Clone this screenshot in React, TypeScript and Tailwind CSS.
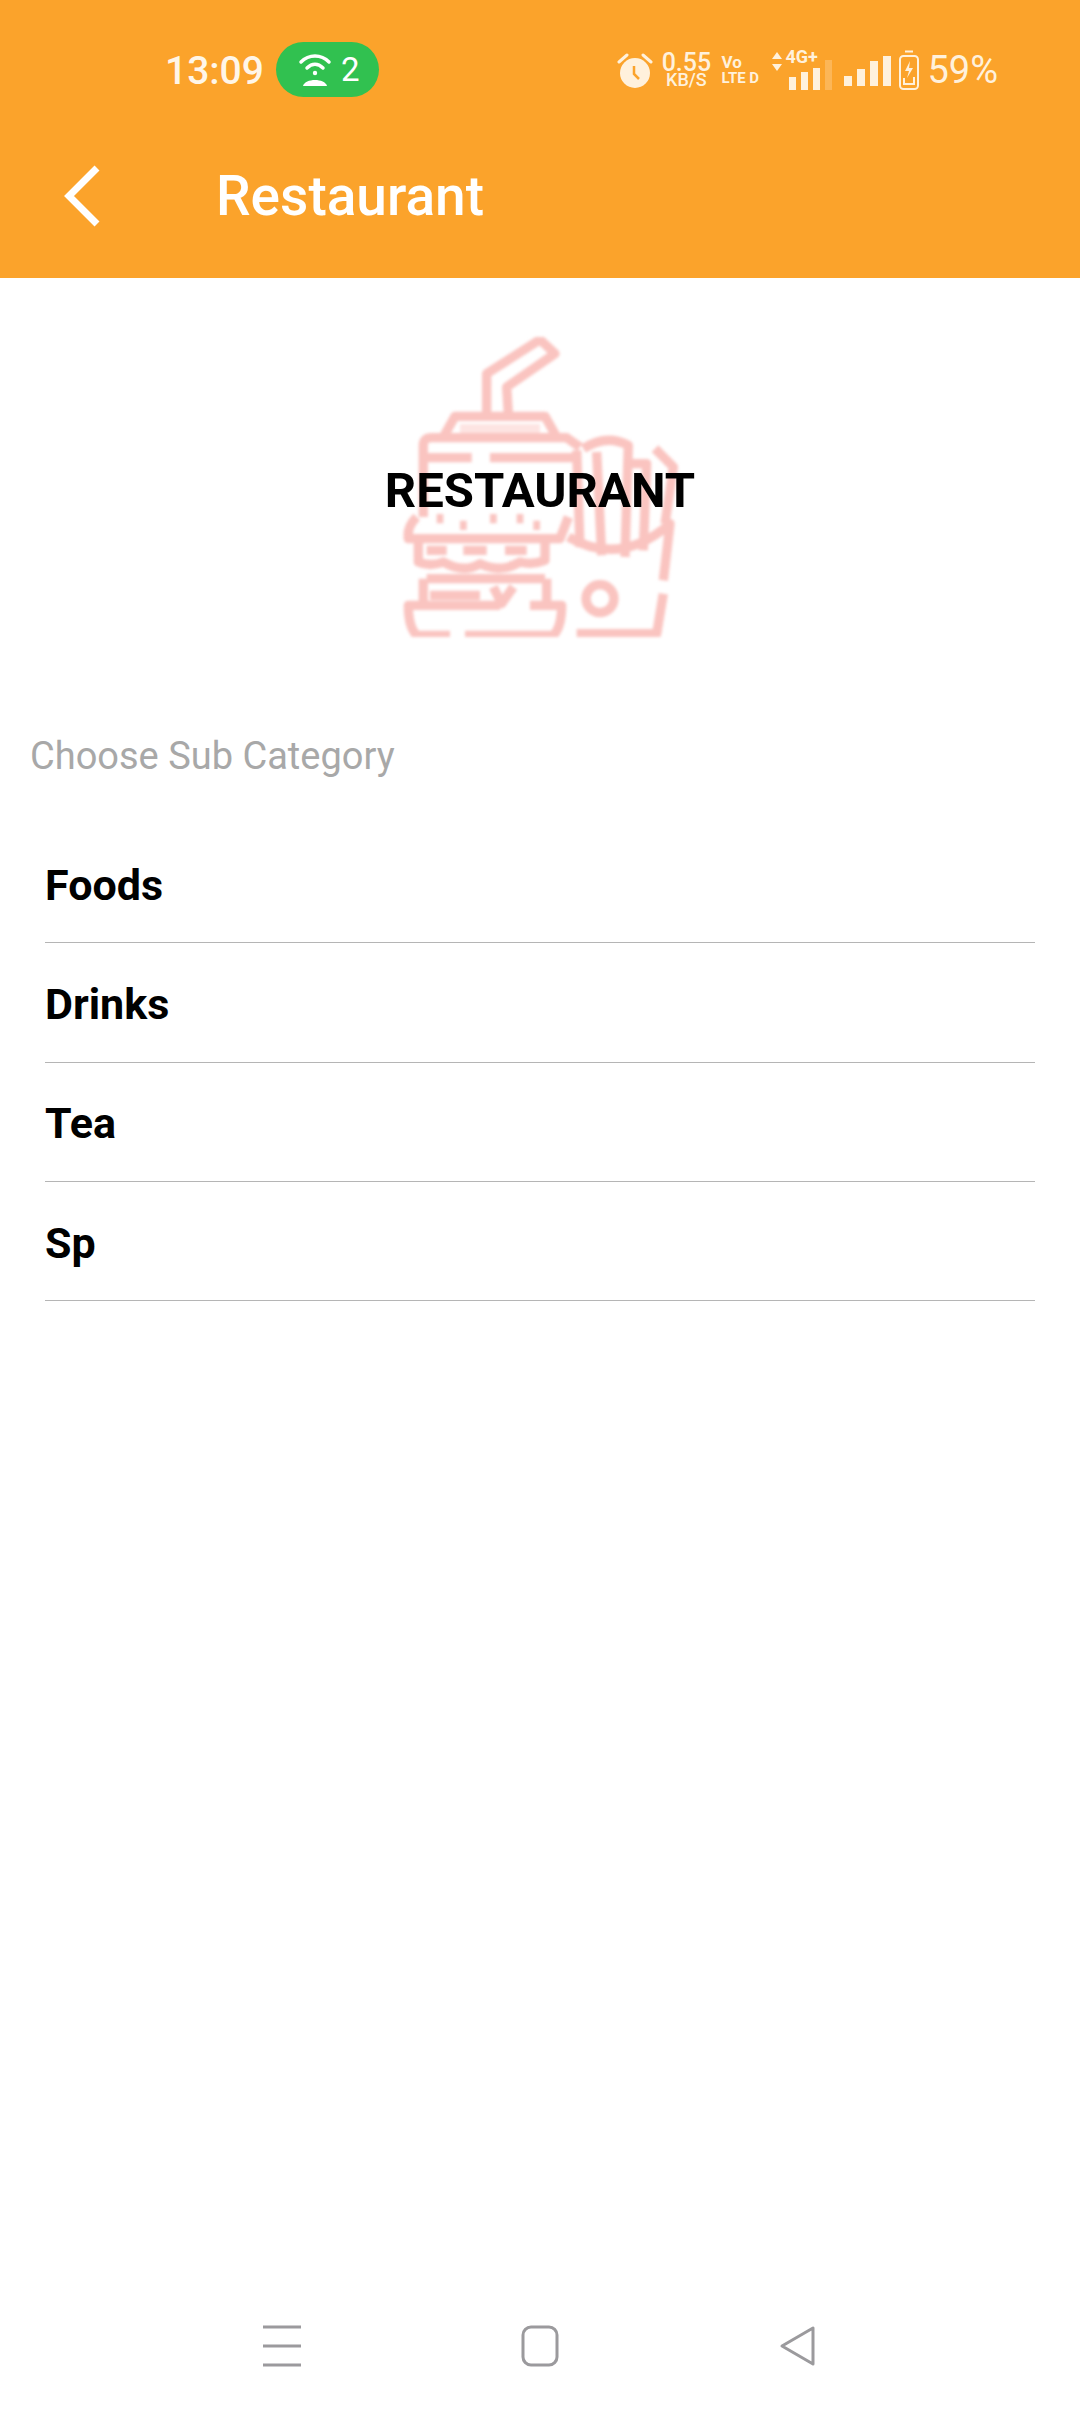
const ROBOTO = "font-['Roboto',sans-serif]";

const rows = ["Foods", "Drinks", "Tea", "Sp"];

/* ------------------------------------------------------------------ */
/*  Status bar                                                         */
/* ------------------------------------------------------------------ */
function Bars({ heights, widths = 8, faded }: { heights: number[]; widths?: number; faded?: number }) {
  return (
    <svg width={heights.length * (widths + 5)} height="32" viewBox={`0 0 ${heights.length * (widths + 5)} 32`}>
      {heights.map((h, i) => (
        <rect
          key={i}
          x={i * (widths + 5)}
          y={32 - h}
          width={widths}
          height={h}
          fill="#fff1dc"
          opacity={faded === i ? 0.25 : 1}
        />
      ))}
    </svg>
  );
}

function StatusBar() {
  return (
    <div className="flex h-[97px] items-start pl-[165px] pr-[82px] pt-[42px]">
      <div className="flex h-[55px] items-center">
        <span className="pt-[3px] text-[39px] font-medium leading-none text-[#fff6e8]">13:09</span>
        <div className="ml-[12px] flex h-[55px] w-[103px] items-center rounded-full bg-[#31c150] pl-[21px]">
          <svg width="36" height="34" viewBox="0 0 36 34" fill="none" stroke="#fff" strokeWidth="3.5" strokeLinecap="round">
            <path d="M4 9 C12 1 24 1 32 9" />
            <path d="M10 15 C15 10 21 10 26 15" />
            <circle cx="18" cy="20" r="2.2" fill="#fff" stroke="none" />
            <path d="M6 33 C8 25 28 25 30 33 Z" fill="#fff" stroke="none" />
          </svg>
          <span className="ml-[8px] text-[33px] leading-none text-white">2</span>
        </div>
      </div>

      <div className="ml-auto flex h-[55px] items-center text-[#fff1dc]">
        <svg width="36" height="36" viewBox="0 0 36 36" className="mr-[7px]">
          <circle cx="18" cy="21" r="15" fill="#fff1dc" />
          <path d="M2 10 L10 3 M34 10 L26 3" stroke="#fff1dc" strokeWidth="3" strokeLinecap="round" />
          <path d="M17 14 L17 22 L22 27" stroke="#fba32b" strokeWidth="2.5" fill="none" />
        </svg>
        <div className="flex w-[52px] flex-col items-center font-medium">
          <span className="text-[25px] leading-[20px]">0.55</span>
          <span className="text-[18px] leading-[14px]">KB/S</span>
        </div>
        <div className="ml-[9px] flex w-[36px] flex-col font-bold">
          <span className="text-[17px] leading-[17px]">Vo</span>
          <span className="whitespace-nowrap text-[15px] leading-[14px]">LTE D</span>
        </div>
        <div className="relative ml-[15px] h-[40px] w-[65px]">
          <svg className="absolute left-0 top-[2px]" width="10" height="20" viewBox="0 0 10 20" fill="#fff1dc">
            <path d="M5 0 L10 7 L0 7 Z M5 19 L10 12 L0 12 Z" />
          </svg>
          <span className="absolute left-[13px] top-[-2px] text-[18px] font-bold leading-[18px]">4G+</span>
          <div className="absolute bottom-0 left-[17px]">
            <Bars heights={[13, 18, 22, 30]} faded={3} widths={7} />
          </div>
        </div>
        <div className="ml-[7px]">
          <Bars heights={[10, 17, 25, 30]} widths={8} />
        </div>
        <svg width="22" height="40" viewBox="0 0 22 40" fill="none" stroke="#fff1dc" strokeWidth="2" className="ml-[2px]">
          <path d="M7 1.5 H15" />
          <rect x="2" y="6" width="18" height="33" rx="3.5" />
          <path d="M12 11 L7 21 H11 L9 28 L15 18 H11 Z" fill="#fff1dc" stroke="none" />
          <path d="M6 28 V34 H16 V27" />
        </svg>
        <span className="ml-[7px] text-[38px] leading-none">59%</span>
      </div>
    </div>
  );
}

/* ------------------------------------------------------------------ */
/*  Hero picture                                                       */
/* ------------------------------------------------------------------ */
function FoodIcon() {
  return (
    <svg
      width="280"
      height="300"
      viewBox="60 50 840 900"
      fill="none"
      stroke="#fac4c0"
      strokeWidth="28"
      strokeLinejoin="round"
      className="blur-[1.5px]"
    >
      {/* straw */}
      <path d="M320 280 V160 L480 58 L525 100 L380 200 L385 280" />
      {/* lid */}
      <path d="M190 350 L225 288 H495 L530 350" />
      <path d="M240 325 H480" stroke="#fde4e2" />
      <path d="M130 590 V375 Q130 352 155 352 H560 Q585 370 600 380" />
      <path d="M130 412 H275 M330 412 H580" />
      {/* fries */}
      <path d="M590 390 L600 680 M650 395 L665 705 M610 385 Q680 340 745 375 L735 710" />
      <path d="M740 430 H800 L790 690 M825 385 L880 440 L855 610" />
      {/* box */}
      <path d="M565 650 Q720 740 870 610 L850 780" />
      <path d="M850 820 L830 940 H590" />
      <circle cx="660" cy="835" r="42" />
      {/* burger */}
      <path d="M110 590 Q80 620 85 655 H540 L565 590" />
      <path d="M170 595 H190 M240 615 H260 M330 595 H350 M410 595 H430 M460 615 H480" />
      <path d="M140 690 H200 M250 690 H320 M375 690 H440" />
      <path d="M115 655 V725 Q150 740 190 725 Q250 760 300 730 Q360 760 420 725 Q460 735 495 720 V655" />
      <path d="M140 775 H495" />
      <path d="M130 775 V850 M500 775 V850" />
      <path d="M150 825 H300 M340 800 L365 850 L400 800" />
      <path d="M210 945 H110 Q85 920 85 855 H360 M450 855 H545 Q545 920 520 945 H255" />
    </svg>
  );
}

/* ------------------------------------------------------------------ */
/*  Page                                                               */
/* ------------------------------------------------------------------ */
export default function App() {
  return (
    <div className={`${ROBOTO} flex h-[2412px] w-[1080px] flex-col bg-white`}>
      <header className="h-[278px] bg-[#fba32b]">
        <StatusBar />
        <div className="mt-[49px] flex h-[100px] items-center pl-[63px]">
          <svg width="38" height="62" viewBox="0 0 38 62" fill="none" stroke="#fff" strokeWidth="7">
            <path d="M34 3 L6 31 L34 59" />
          </svg>
          <span className="ml-[115px] text-[55px] font-medium leading-none text-white">Restaurant</span>
        </div>
      </header>

      <section className="relative mt-[59px] flex justify-center">
        <FoodIcon />
        <div className="absolute inset-0 flex items-center justify-center pt-[6px]">
          <span className="text-[49px] font-bold leading-none text-black">RESTAURANT</span>
        </div>
      </section>

      <p className="ml-[30px] mt-[98px] text-[38px] leading-[42px] text-[#a8a8a8]">Choose Sub Category</p>

      <ul className="mx-[45px] mt-[47px]">
        {rows.map((row) => (
          <li key={row} className="flex h-[119.3px] items-center border-b border-[#b5b5b5] pt-[4px]">
            <span className="text-[43px] font-bold leading-none text-black">{row}</span>
          </li>
        ))}
      </ul>

      <nav className="mt-auto flex h-[87px] items-start justify-center gap-[220px]">
        <svg width="38" height="42" viewBox="0 0 38 42" stroke="#9b9a9d" strokeWidth="3">
          <path d="M0 2 H38 M0 21 H38 M0 40 H38" />
        </svg>
        <svg width="38" height="42" viewBox="0 0 38 42" fill="none" stroke="#9b9a9d" strokeWidth="3">
          <rect x="2" y="2" width="34" height="38" rx="8" />
        </svg>
        <svg width="38" height="42" viewBox="0 0 38 42" fill="none" stroke="#9b9a9d" strokeWidth="3" strokeLinejoin="round">
          <path d="M34 3 V39 L3 21 Z" />
        </svg>
      </nav>
    </div>
  );
}
